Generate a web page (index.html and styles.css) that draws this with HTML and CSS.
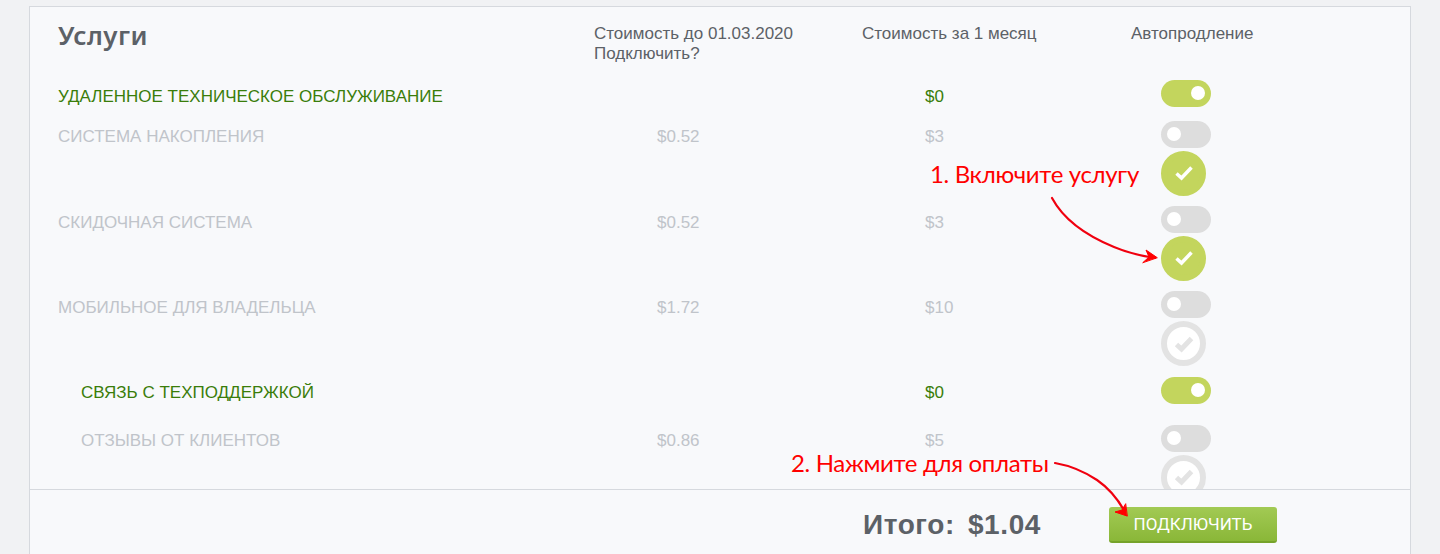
FILE: index.html
```html
<!DOCTYPE html>
<html lang="ru">

<head>
  <meta charset="UTF-8">
  <meta name="viewport" content="width=device-width, initial-scale=1.0">
  <title>Услуги</title>
  <link rel="stylesheet" href="styles.css">
</head>

<body>
  <div class="card">
    <div class="services">
      <div class="head">
        <h2>Услуги</h2>
        <div class="head-col">Стоимость до 01.03.2020<br>Подключить?</div>
        <div class="head-col">Стоимость за 1 месяц</div>
        <div class="head-col">Автопродление</div>
      </div>

      <div class="row active">
        <div class="name">Удаленное техническое обслуживание</div>
        <div class="price"></div>
        <div class="price">$0</div>
        <div class="auto"><span class="toggle on"></span></div>
      </div>

      <div class="row with-check">
        <div class="name">Система накопления</div>
        <div class="price">$0.52</div>
        <div class="price">$3</div>
        <div class="auto">
          <span class="toggle"></span>
          <span class="check on">
            <svg viewBox="0 0 20 20"><path d="M2.500 10.500l5 4.500 10-10.500"/></svg>
          </span>
        </div>
      </div>

      <div class="row with-check">
        <div class="name">Скидочная система</div>
        <div class="price">$0.52</div>
        <div class="price">$3</div>
        <div class="auto">
          <span class="toggle"></span>
          <span class="check on">
            <svg viewBox="0 0 20 20"><path d="M2.500 10.500l5 4.500 10-10.500"/></svg>
          </span>
        </div>
      </div>

      <div class="row with-check">
        <div class="name">Мобильное для владельца</div>
        <div class="price">$1.72</div>
        <div class="price">$10</div>
        <div class="auto">
          <span class="toggle"></span>
          <span class="check">
            <svg viewBox="0 0 20 20"><path d="M2.500 10.500l5 4.500 10-10.500"/></svg>
          </span>
        </div>
      </div>

      <div class="row sub active">
        <div class="name">Связь с техподдержкой</div>
        <div class="price"></div>
        <div class="price">$0</div>
        <div class="auto"><span class="toggle on"></span></div>
      </div>

      <div class="row sub with-check">
        <div class="name">Отзывы от клиентов</div>
        <div class="price">$0.86</div>
        <div class="price">$5</div>
        <div class="auto">
          <span class="toggle"></span>
          <span class="check">
            <svg viewBox="0 0 20 20"><path d="M2.500 10.500l5 4.500 10-10.500"/></svg>
          </span>
        </div>
      </div>
    </div>

    <div class="total-bar">
      <div class="total"><span>Итого:</span><span>$1.04</span></div>
      <button class="pay">Подключить</button>
    </div>
  </div>

  <!-- Red hints on top of the screenshot -->
  <div class="hint hint-one">1. Включите услугу</div>
  <div class="hint hint-two">2. Нажмите для оплаты</div>
  <svg class="arrows" viewBox="0 0 1440 554">
    <path d="M1052 198C1066 224 1092 238 1114 247C1128 253 1142 256 1155 258"/>
    <path class="head-mark" d="M1157 257.500L1146 250L1149 257L1143 262.500Z"/>
    <path d="M1055 463C1072 466 1085 472 1097 480C1110 489 1119 501 1125 512"/>
    <path class="head-mark" d="M1127 516L1115 512L1122 510L1125.500 504Z"/>
  </svg>
</body>

</html>
```

FILE: styles.css
```css
/* Global styles */
html,
body {
  height: 554px;
  overflow: hidden;
}

body {
  margin: 0;
  padding: 6px 29px 0;
  box-sizing: border-box;
  position: relative;
  background-color: #f1f2f4;
  font-family: "Liberation Sans", Arial, sans-serif;
  color: #5c6167;
}

/* Card */
.card {
  height: 548px;
  box-sizing: border-box;
  display: flex;
  flex-direction: column;
  background-color: #f8f9fb;
  border: 1px solid #d6d9de;
  border-bottom: none;
}

.services {
  flex: 1;
  min-height: 0;
  overflow: hidden;
  padding-left: 28px;
}

/* Header */
.head,
.row {
  display: grid;
  grid-template-columns: 536px 268px 269px 1fr;
}

.head {
  height: 73px;
  padding-top: 15px;
  box-sizing: border-box;
}

.head h2 {
  margin: 0;
  font-family: "Noto Sans", sans-serif;
  font-size: 26px;
  line-height: 26px;
  font-weight: 600;
  letter-spacing: 0.5px;
}

.head-col {
  padding-top: 2px;
  font-size: 17px;
  line-height: 20px;
}

/* Rows */
.row {
  padding-bottom: 13.8px;
  font-size: 17px;
  color: #c0c4ca;
}

.row.with-check {
  padding-bottom: 10.2px;
}

.row.sub {
  margin-top: 0.3px;
  padding-bottom: 21px;
}

.row.active {
  color: #3a7d0a;
}

.name {
  text-transform: uppercase;
  padding-top: 6.6px;
  line-height: 20px;
}

.price {
  padding: 6.6px 0 0 63px;
  line-height: 20px;
}

.row.sub .name {
  padding-left: 23px;
}

.row.sub.with-check .name,
.row.sub.with-check .price {
  padding-top: 5.6px;
}

.auto {
  padding-left: 30px;
  display: flex;
  flex-direction: column;
  gap: 3px;
}

/* Toggle */
.toggle {
  display: block;
  position: relative;
  width: 50px;
  height: 27px;
  border-radius: 14px;
  background-color: #dddddd;
}

.toggle::after {
  content: "";
  position: absolute;
  top: 6px;
  left: 6px;
  width: 14px;
  height: 14px;
  border-radius: 50%;
  background-color: #fff;
}

.toggle.on {
  background-color: #c3d55d;
}

.toggle.on::after {
  left: 30px;
}

/* Round check */
.check {
  display: flex;
  align-items: center;
  justify-content: center;
  width: 33px;
  height: 33px;
  border: 6px solid #e3e3e3;
  border-radius: 50%;
  background-color: #fff;
}

.check svg {
  width: 20px;
  height: 20px;
  fill: none;
  stroke: #e3e3e3;
  stroke-width: 5px;
}

.check.on {
  border-color: #c3d55d;
  background-color: #c3d55d;
}

.check.on svg {
  stroke: #fff;
  stroke-width: 3.5px;
}

/* Total */
.total-bar {
  height: 65px;
  box-sizing: border-box;
  flex-shrink: 0;
  border-top: 1px solid #d6d9de;
  padding: 17px 0 0 833px;
  display: flex;
  align-items: flex-start;
}

.total {
  width: 246px;
  display: flex;
  gap: 13px;
  font-size: 28px;
  line-height: 36px;
  font-weight: bold;
  letter-spacing: 0.6px;
}

.pay {
  width: 168px;
  height: 36px;
  padding: 0;
  border: none;
  border-bottom: 2px solid #76a32a;
  border-radius: 3px;
  background: linear-gradient(#a2ca54, #8ab738);
  color: #fff;
  font-family: Roboto, sans-serif;
  font-size: 17px;
  text-transform: uppercase;
}

/* Annotations */
.hint {
  position: absolute;
  font-family: Lato, sans-serif;
  font-size: 24px;
  line-height: 30px;
  letter-spacing: -0.34px;
  color: #ff0000;
  white-space: nowrap;
}

.hint-one {
  top: 159px;
  left: 930px;
}

.hint-two {
  top: 448px;
  left: 791px;
}

.arrows {
  position: absolute;
  top: 0;
  left: 0;
  width: 1440px;
  height: 554px;
  fill: none;
  stroke: #f0000f;
  stroke-width: 2.2px;
  stroke-linecap: round;
}

.arrows .head-mark {
  fill: #ff0000;
  stroke: #ff0000;
  stroke-width: 1px;
}
```
